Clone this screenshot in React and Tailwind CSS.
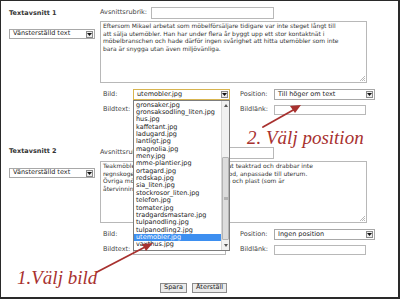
import React from 'react';

const files = [
  'gronsaker.jpg',
  'gronsaksodling_liten.jpg',
  'hus.jpg',
  'kaffetant.jpg',
  'ladugard.jpg',
  'lantligt.jpg',
  'magnolia.jpg',
  'meny.jpg',
  'mme-plantier.jpg',
  'ortagard.jpg',
  'redskap.jpg',
  'sia_liten.jpg',
  'stockrosor_liten.jpg',
  'telefon.jpg',
  'tomater.jpg',
  'tradgardsmastare.jpg',
  'tulpanodling.jpg',
  'tulpanodling2.jpg',
  'utemobler.jpg',
  'vaxthus.jpg',
];

function Arrow() {
  return (
    <div className="flex h-[7px] w-[7px] items-center justify-center border border-[#8a8a8a] bg-[#ececec]">
      <svg width="5" height="3" viewBox="0 0 5 3">
        <path d="M0 0h5L2.5 3z" fill="#111" />
      </svg>
    </div>
  );
}

function Select({ className, text, focus }) {
  return (
    <div
      className={`${className} flex h-full items-center justify-between border bg-white pl-[3px] pr-[1px] text-[6.5px] text-[#222] ${
        focus ? 'border-[#d8b550]' : 'border-[#a8a8a8]'
      }`}
    >
      <span>{text}</span>
      <Arrow />
    </div>
  );
}

function Input({ className }) {
  return <div className={`${className} h-full border border-[#b8b8b8] bg-white`} />;
}

function Textarea({ lines }) {
  return (
    <div className="relative h-[62px] w-[267px] border border-[#b8b8b8] bg-white pl-[2px] text-[6px] leading-[7.55px] text-[#333]">
      {lines.map((l, i) => (
        <div key={i} className="whitespace-nowrap">
          {l}
        </div>
      ))}
      <svg className="absolute bottom-[1px] right-[1px]" width="5" height="5" viewBox="0 0 5 5">
        <path d="M5 0L0 5M5 2L2 5M5 4L4 5" stroke="#999" strokeWidth="0.7" />
      </svg>
    </div>
  );
}

function Section({ title, titleTop, selectTop, lines, bild, position, focus }) {
  return (
    <div className="flex">
      <div className="w-[91px]">
        <div className={`${titleTop} text-[6.5px] font-bold leading-[8px] text-[#333]`}>{title}</div>
        <div className={`${selectTop} h-[10px] w-[86px]`}>
          <Select className="w-full" text="Vänsterställd text" />
        </div>
      </div>
      <div className="w-[275px] text-[6.5px] text-[#444]">
        <div className="flex h-[12px] items-center">
          <span className="w-[51px]">Avsnittsrubrik:</span>
          <Input className="w-[123px]" />
        </div>
        <div className="mt-[2px]">
          <Textarea lines={lines} />
        </div>
        <div className="mt-[6px] flex h-[11px] items-center">
          <span className="w-[33px] pl-[3px]">Bild:</span>
          <Select className="w-[97px]" text={bild} focus={focus} />
          <span className="ml-[10px] w-[34px]">Position:</span>
          <Select className="w-[101px]" text={position} />
        </div>
        <div className="mt-[5px] flex h-[10px] items-center">
          <span className="w-[33px] pl-[3px]">Bildtext:</span>
          <Input className="w-[93px]" />
          <span className="ml-[14px] w-[34px]">Bildlänk:</span>
          <Input className="w-[92px]" />
        </div>
      </div>
    </div>
  );
}

export default function App() {
  return (
    <div className="relative h-[299px] w-[400px] overflow-hidden border-b-2 border-l border-r-2 border-t border-[#2a2a2a] bg-white pl-[8px] pt-[6px] font-['DejaVu_Sans',sans-serif]">
      <Section
        title="Textavsnitt 1"
        titleTop="mt-[2px]"
        selectTop="mt-[12px]"
        lines={[
          'Eftersom Mikael arbetat som möbelförsäljare tidigare var inte steget långt till',
          'att sälja utemöbler. Han har under flera år byggt upp ett stor kontaktnät i',
          'möbelbranschen och hade därför ingen svårighet att hitta utemöbler som inte',
          'bara är snygga utan även miljövänliga.',
        ]}
        bild="utemobler.jpg"
        position="Till höger om text"
        focus
      />
      <div className="mt-[32px]">
        <Section
          title="Textavsnitt 2"
          titleTop="mt-[0px]"
          selectTop="mt-[13px]"
          lines={[
            'Teakmöblerna är tillverkade i plantageodlat teaktrad och drabbar inte',
            'regnskogen. Det kallas Plantation Hardwood, anpassade till uterum.',
            'Övriga möbler är tillverkade av aluminium och plast (som är',
            'återvinningsbart material).',
          ]}
          bild="utemobler.jpg"
          position="Ingen position"
        />
      </div>

      <div className="mt-[28px] flex gap-[5px] pl-[151px] text-[6.5px] text-[#222]">
        <div className="flex h-[10px] w-[27px] items-center justify-center border border-[#8c8c8c] bg-[#ebebeb]">Spara</div>
        <div className="flex h-[10px] w-[35px] items-center justify-center border border-[#8c8c8c] bg-[#ebebeb]">Återställ</div>
      </div>

      {/* open dropdown list */}
      <div className="absolute left-[132px] top-[99px] flex h-[151px] w-[97px] border border-[#7d7d7d] bg-white">
        <div className="flex-1 pt-[0.5px] text-[6.5px] text-[#222]">
          {files.map((f) => (
            <div
              key={f}
              className={`h-[7.36px] whitespace-nowrap pl-[2px] leading-[7.36px] ${
                f === 'utemobler.jpg' ? 'bg-[#3d8ff0] text-white' : ''
              }`}
            >
              {f}
            </div>
          ))}
        </div>
        <div className="flex w-[8px] flex-col border-l border-[#d6d6d6] bg-[#f1f1f1]">
          <div className="flex h-[8px] items-center justify-center">
            <svg width="4" height="3" viewBox="0 0 4 3">
              <path d="M0 3h4L2 0z" fill="#555" />
            </svg>
          </div>
          <div className="h-[48px]" />
          <div className="flex h-[83px] items-center justify-center rounded-[1px] border border-[#b4b4b4] bg-[#dcdcdc]">
            <svg width="4" height="3" viewBox="0 0 4 3">
              <path d="M0 0.5h4M0 1.5h4M0 2.5h4" stroke="#888" strokeWidth="0.5" />
            </svg>
          </div>
          <div className="flex flex-1 items-center justify-center">
            <svg width="4" height="3" viewBox="0 0 4 3">
              <path d="M0 0h4L2 3z" fill="#555" />
            </svg>
          </div>
        </div>
      </div>

      {/* annotations */}
      <div className="absolute left-[246px] top-[126px] font-['Liberation_Serif',serif] text-[19px] italic leading-[22px] text-[#a8312f]">
        2. Välj position
      </div>
      <div className="absolute left-[16px] top-[266px] font-['Liberation_Serif',serif] text-[19px] italic leading-[22px] text-[#a8312f]">
        1.Välj bild
      </div>
      <svg className="pointer-events-none absolute left-0 top-0" width="400" height="299" viewBox="0 0 400 299">
        <g stroke="#a8312f" strokeWidth="1.8" fill="#a8312f" strokeLinecap="round">
          <line x1="262" y1="126" x2="294" y2="108" />
          <path d="M300 104L289 105L294 112Z" stroke="none" />
          <line x1="96" y1="271" x2="146" y2="245" />
          <path d="M152 242L141 243L145 250Z" stroke="none" />
        </g>
      </svg>
    </div>
  );
}
